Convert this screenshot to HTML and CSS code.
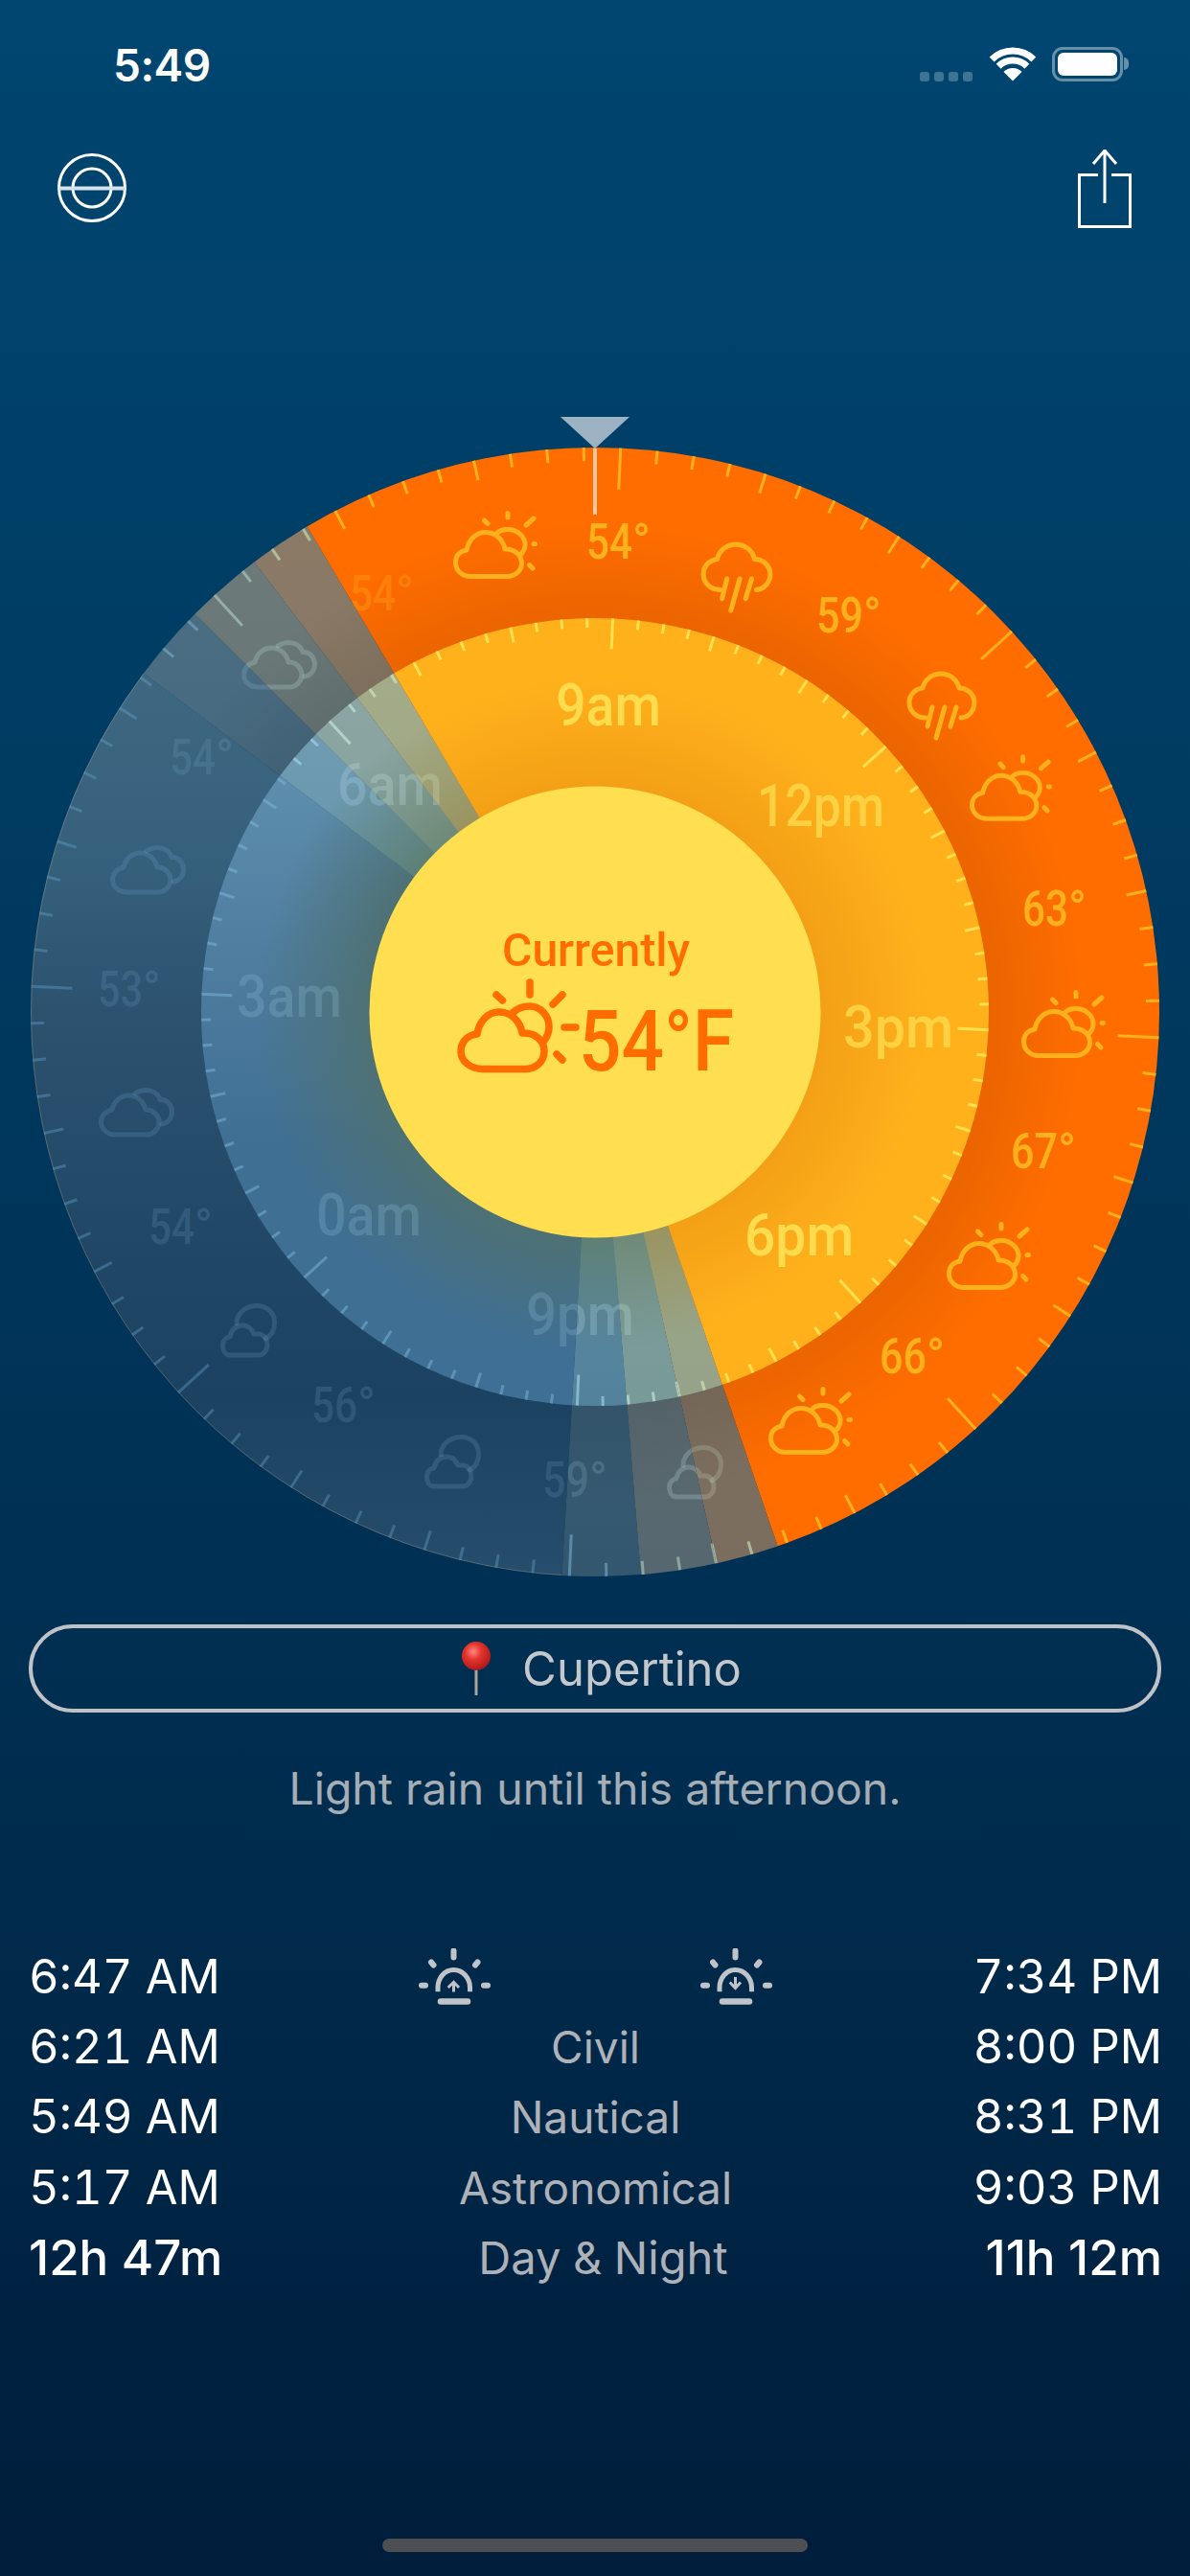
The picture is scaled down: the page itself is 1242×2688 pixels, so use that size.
FILE: index.html
```html
<!DOCTYPE html>
<html lang="en">
<head>
<meta charset="utf-8">
<title>Cupertino weather dial</title>
<link rel="stylesheet" href="styles.css">
</head>
<body>
<main class="screen">
  <header class="status">
    <span class="clock">5:49</span>
    <div class="status-icons">
      <div class="signal"><i></i><i></i><i></i><i></i></div>
      <svg class="wifi" viewBox="0 0 50 36"><path class="wifi-arc" d="M3.100 13.100A31 31 0 0 1 46.900 13.100"/><path class="wifi-arc" d="M10.200 20.200A21 21 0 0 1 39.800 20.200"/><path class="wifi-fan" d="M25 35.500L15.500 26A13.500 13.500 0 0 1 34.500 26Z"/></svg>
      <div class="battery"><div class="battery-fill"></div></div>
    </div>
  </header>

  <nav class="nav">
    <svg class="nav-globe" viewBox="0 0 72 72"><circle class="line" cx="36" cy="36" r="34.500"/><circle class="line" cx="36" cy="36" r="20"/><path class="line bar" d="M1 36.500H71"/></svg>
    <svg class="nav-share" viewBox="0 0 56 82"><path class="line" d="M21 26.500H1.500V80.500H54.500V26.500H35M28 56V2M16 15L28 1L40 15"/></svg>
  </nav>

  <svg class="dial" viewBox="0 416 1242 1250" role="img" aria-label="24 hour weather dial">
    <defs>
      <linearGradient id="outerNight" x1="0" y1="0" x2="0" y2="1"><stop offset="0" stop-color="#4a7189"/><stop offset=".13" stop-color="#436a83"/><stop offset=".37" stop-color="#35607c"/><stop offset=".5" stop-color="#2c5270"/><stop offset=".71" stop-color="#214766"/><stop offset=".84" stop-color="#1c4262"/><stop offset="1" stop-color="#264d6b"/></linearGradient>
      <linearGradient id="outerAstro" x1="0" y1="0" x2="0" y2="1"><stop offset="0" stop-color="#4f7186"/><stop offset="1" stop-color="#33576f"/></linearGradient>
      <linearGradient id="outerNaut" x1="0" y1="0" x2="0" y2="1"><stop offset="0" stop-color="#6e7c7a"/><stop offset="1" stop-color="#57676f"/></linearGradient>
      <linearGradient id="outerCivil" x1="0" y1="0" x2="0" y2="1"><stop offset="0" stop-color="#8c7b67"/><stop offset="1" stop-color="#7b6d5e"/></linearGradient>
      <linearGradient id="innerNight" x1="0" y1="0" x2="0" y2="1"><stop offset="0" stop-color="#6796b1"/><stop offset=".19" stop-color="#5f8fad"/><stop offset=".43" stop-color="#4e7da0"/><stop offset=".67" stop-color="#3f6f92"/><stop offset="1" stop-color="#3f6f94"/></linearGradient>
      <linearGradient id="innerAstro" x1="0" y1="0" x2="0" y2="1"><stop offset="0" stop-color="#74a0b6"/><stop offset="1" stop-color="#53829d"/></linearGradient>
      <linearGradient id="innerNaut" x1="0" y1="0" x2="0" y2="1"><stop offset="0" stop-color="#8da7a3"/><stop offset="1" stop-color="#789a98"/></linearGradient>
      <linearGradient id="innerCivil" x1="0" y1="0" x2="0" y2="1"><stop offset="0" stop-color="#a4ac88"/><stop offset="1" stop-color="#96a388"/></linearGradient>
      <radialGradient id="shadeNight"><stop offset=".572" stop-color="#4e7174"/><stop offset=".7" stop-color="#4e7174" stop-opacity=".55"/><stop offset=".86" stop-color="#4e7174" stop-opacity="0"/></radialGradient>
      <radialGradient id="shadeAstro"><stop offset=".572" stop-color="#5e8075"/><stop offset=".86" stop-color="#5e8075" stop-opacity="0"/></radialGradient>
      <radialGradient id="shadeNaut"><stop offset=".572" stop-color="#6f8a78"/><stop offset=".86" stop-color="#6f8a78" stop-opacity="0"/></radialGradient>
      <radialGradient id="shadeCivil"><stop offset=".572" stop-color="#9a9460"/><stop offset=".86" stop-color="#9a9460" stop-opacity="0"/></radialGradient>
      <radialGradient id="shadeDay"><stop offset=".572" stop-color="#f3a016"/><stop offset=".85" stop-color="#f3a016" stop-opacity="0"/></radialGradient>
      <radialGradient id="shadeOuter"><stop offset=".698" stop-color="#000" stop-opacity=".08"/><stop offset=".87" stop-color="#000" stop-opacity="0"/></radialGradient>

      <clipPath id="clipDay"><polygon points="621,1056 213,368 1021,363 1421,1056 880,1813"/></clipPath>
      <clipPath id="clipCivil"><polygon points="621,1056 138,418 213,368"/><polygon points="621,1056 880,1813 793,1837"/></clipPath>
      <clipPath id="clipNaut"><polygon points="621,1056 54,492 138,418"/><polygon points="621,1056 793,1837 686,1853"/></clipPath>
      <clipPath id="clipAstro"><polygon points="621,1056 -19,576 54,492"/><polygon points="621,1056 686,1853 574,1855"/></clipPath>
      <clipPath id="clipNight"><polygon points="621,1056 574,1855 221,1749 -179,1056 -19,576"/></clipPath>

      <symbol id="sunCloud" viewBox="0 0 126 97" overflow="visible">
        <path d="M27 93.500C15 93.500 4 86 4 75C4 65 11 58 21 57C23 44 32 34 44 34C57 34 66 44 68 56H70C82 56 91 64 91 75C91 86 82 93.500 71 93.500Z"/>
        <path d="M58 35C63 30 69 28 76 28C87 28 96 38 96 49C96 55 94 60 91 64"/>
        <path d="M76 3V16M110 16L100 26M112 50H124M104 78L110 84M41 16L47.500 22"/>
      </symbol>
      <symbol id="sunCloudSmall" viewBox="0 0 89 71" overflow="visible" class="thin">
        <path d="M18 68.500C9 68.500 2.500 62 2.500 54C2.500 47 7 42 14 41C16 30 24 22.500 34 22.500C44 22.500 52 30 54 40H55C64 40 71.500 46 71.500 55C71.500 62 65 68.500 56 68.500Z"/>
        <path d="M45 24C48 20.500 52 19.500 57 19.500C67 19.500 75 27 75 35C75 39 73.500 43 70 46"/>
        <path d="M57 2.500V7M76 15L84 8M84 34.500H85.500M79.500 56.500L83 60M32.500 10L36 13.500"/>
      </symbol>
      <symbol id="rainCloud" viewBox="0 0 74 72" overflow="visible" class="thin">
        <path d="M20 49C10 49 3 42 3 33C3 25 9 19 17 18C19 9 27 3 36 3C45 3 53 9 55 18C64 18 71 25 71 33C71 42 64 49 57 49"/>
        <path d="M27 38L22 58M40 38L31 70M52 38L46 58"/>
      </symbol>
      <symbol id="twoClouds" viewBox="0 0 79 52" overflow="visible" class="thin">
        <path d="M17 49C9 49 2.500 43 2.500 36C2.500 29 8 24 14 23C16 14 23 8 31 8C40 8 47 14 49 23H50C57 23 63 29 63 36C63 43 57 49 50 49Z"/>
        <path d="M38 6C41 4 45 2.500 49 2.500C56 2.500 62 6 64 12.500H66C72 13 76.500 19 76.500 25C76.500 32 72 37 66 38"/>
      </symbol>
      <symbol id="moonCloud" viewBox="0 0 59 57" overflow="visible" class="thin">
        <path d="M10 54C5 54 2.500 49 2.500 44C2.500 39 6 35 10 35C11 28 16 23 23 23C29 23 33 27 35 32H41C46 33 49 38 49 43C49 49 45 54 40 54Z"/>
        <path d="M17 21C17 10 27 2.500 38 2.500C49 2.500 56.500 10 56.500 20C56.500 28 53 34 47 37"/>
      </symbol>

      <!-- three quarter-hour marks, then the hour mark, then the three-hour group -->
      <g id="tickQuarters">
        <g transform="rotate(3.75 621 1056)"><line class="tick-o" x1="621" y1="467" x2="621" y2="481"/><line class="tick-i" x1="621" y1="645" x2="621" y2="655"/></g>
        <g transform="rotate(7.5 621 1056)"><line class="tick-o" x1="621" y1="467" x2="621" y2="481"/><line class="tick-i" x1="621" y1="645" x2="621" y2="655"/></g>
        <g transform="rotate(11.25 621 1056)"><line class="tick-o" x1="621" y1="467" x2="621" y2="481"/><line class="tick-i" x1="621" y1="645" x2="621" y2="655"/></g>
      </g>
      <g id="tickHour">
        <line class="tick-o" x1="621" y1="467" x2="621" y2="488"/>
        <line class="tick-i" x1="621" y1="645" x2="621" y2="661"/>
        <use href="#tickQuarters"/>
      </g>
      <g id="tickThree">
        <line class="tick-o" x1="621" y1="467" x2="621" y2="510"/>
        <line class="tick-i" x1="621" y1="645" x2="621" y2="677"/>
        <use href="#tickQuarters"/>
        <use href="#tickHour" transform="rotate(15 621 1056)"/>
        <use href="#tickHour" transform="rotate(30 621 1056)"/>
      </g>
      <g id="ticks" transform="rotate(2.6 621 1056)">
        <use href="#tickThree"/>
        <use href="#tickThree" transform="rotate(45 621 1056)"/>
        <use href="#tickThree" transform="rotate(90 621 1056)"/>
        <use href="#tickThree" transform="rotate(135 621 1056)"/>
        <use href="#tickThree" transform="rotate(180 621 1056)"/>
        <use href="#tickThree" transform="rotate(225 621 1056)"/>
        <use href="#tickThree" transform="rotate(270 621 1056)"/>
        <use href="#tickThree" transform="rotate(315 621 1056)"/>
      </g>

      <g id="marks">
        <use href="#ticks"/>
        <g class="temps">
          <text x="612" y="583"><tspan textLength="48" lengthAdjust="spacingAndGlyphs">54</tspan><tspan textLength="19" lengthAdjust="spacingAndGlyphs">°</tspan></text>
          <text class="faint" x="365" y="637"><tspan textLength="48" lengthAdjust="spacingAndGlyphs">54</tspan><tspan textLength="19" lengthAdjust="spacingAndGlyphs">°</tspan></text>
          <text x="852" y="660"><tspan textLength="49" lengthAdjust="spacingAndGlyphs">59</tspan><tspan textLength="19" lengthAdjust="spacingAndGlyphs">°</tspan></text>
          <text x="1067" y="966"><tspan textLength="48" lengthAdjust="spacingAndGlyphs">63</tspan><tspan textLength="19" lengthAdjust="spacingAndGlyphs">°</tspan></text>
          <text x="1055" y="1219"><tspan textLength="49" lengthAdjust="spacingAndGlyphs">67</tspan><tspan textLength="19" lengthAdjust="spacingAndGlyphs">°</tspan></text>
          <text x="918" y="1433"><tspan textLength="49" lengthAdjust="spacingAndGlyphs">66</tspan><tspan textLength="19" lengthAdjust="spacingAndGlyphs">°</tspan></text>
          <text x="566" y="1562"><tspan textLength="49" lengthAdjust="spacingAndGlyphs">59</tspan><tspan textLength="19" lengthAdjust="spacingAndGlyphs">°</tspan></text>
          <text x="325" y="1484"><tspan textLength="48" lengthAdjust="spacingAndGlyphs">56</tspan><tspan textLength="19" lengthAdjust="spacingAndGlyphs">°</tspan></text>
          <text x="155" y="1298"><tspan textLength="48" lengthAdjust="spacingAndGlyphs">54</tspan><tspan textLength="19" lengthAdjust="spacingAndGlyphs">°</tspan></text>
          <text x="102" y="1050"><tspan textLength="47" lengthAdjust="spacingAndGlyphs">53</tspan><tspan textLength="19" lengthAdjust="spacingAndGlyphs">°</tspan></text>
          <text x="177" y="808"><tspan textLength="48" lengthAdjust="spacingAndGlyphs">54</tspan><tspan textLength="19" lengthAdjust="spacingAndGlyphs">°</tspan></text>
        </g>
        <g class="hours">
          <text x="580" y="757" textLength="110" lengthAdjust="spacingAndGlyphs">9am</text>
          <text class="dim" x="790" y="862" textLength="133" lengthAdjust="spacingAndGlyphs">12pm</text>
          <text class="dim" x="880" y="1093" textLength="115" lengthAdjust="spacingAndGlyphs">3pm</text>
          <text x="777" y="1310" textLength="114" lengthAdjust="spacingAndGlyphs">6pm</text>
          <text x="549" y="1393" textLength="113" lengthAdjust="spacingAndGlyphs">9pm</text>
          <text x="330" y="1289" textLength="110" lengthAdjust="spacingAndGlyphs">0am</text>
          <text x="247" y="1061" textLength="110" lengthAdjust="spacingAndGlyphs">3am</text>
          <text x="352" y="840" textLength="110" lengthAdjust="spacingAndGlyphs">6am</text>
        </g>
        <g class="glyph">
          <use href="#sunCloudSmall" x="473" y="533" width="89" height="71"/>
          <use href="#rainCloud" x="731" y="565" width="76" height="74"/>
          <use href="#rainCloud" x="946" y="700" width="74" height="72"/>
          <use href="#sunCloudSmall" x="1012" y="787" width="87" height="70"/>
          <use href="#sunCloudSmall" x="1066" y="1033" width="89" height="71"/>
          <use href="#sunCloudSmall" x="988" y="1275" width="89" height="71"/>
          <use href="#sunCloudSmall" x="802" y="1447" width="89" height="71"/>
          <use href="#moonCloud" x="696" y="1508" width="59" height="57"/>
          <use href="#moonCloud" x="443" y="1497" width="59" height="57"/>
          <use href="#moonCloud" x="230" y="1360" width="59" height="57"/>
          <use href="#twoClouds" x="103" y="1135" width="79" height="52"/>
          <use href="#twoClouds" x="115" y="882" width="79" height="52"/>
          <use href="#twoClouds" x="252" y="668" width="79" height="52"/>
        </g>
      </g>
    </defs>

    <g class="sector sec-night" clip-path="url(#clipNight)">
      <circle class="ring-o" cx="621" cy="1056" r="589"/>
      <circle class="rim" cx="621" cy="1056" r="588.500"/>
      <circle class="ring-i" cx="621" cy="1056" r="411"/>
      <circle class="ring-s" cx="621" cy="1056" r="411"/>
      <use href="#marks"/>
    </g>
    <g class="sector sec-astro" clip-path="url(#clipAstro)">
      <circle class="ring-o" cx="621" cy="1056" r="589"/>
      <circle class="outer-shade" cx="621" cy="1056" r="589"/>
      <circle class="ring-i" cx="621" cy="1056" r="411"/>
      <circle class="ring-s" cx="621" cy="1056" r="411"/>
      <use href="#marks"/>
    </g>
    <g class="sector sec-naut" clip-path="url(#clipNaut)">
      <circle class="ring-o" cx="621" cy="1056" r="589"/>
      <circle class="outer-shade" cx="621" cy="1056" r="589"/>
      <circle class="ring-i" cx="621" cy="1056" r="411"/>
      <circle class="ring-s" cx="621" cy="1056" r="411"/>
      <use href="#marks"/>
    </g>
    <g class="sector sec-civil" clip-path="url(#clipCivil)">
      <circle class="ring-o" cx="621" cy="1056" r="589"/>
      <circle class="outer-shade" cx="621" cy="1056" r="589"/>
      <circle class="ring-i" cx="621" cy="1056" r="411"/>
      <circle class="ring-s" cx="621" cy="1056" r="411"/>
      <use href="#marks"/>
    </g>
    <g class="sector sec-day" clip-path="url(#clipDay)">
      <circle class="ring-o" cx="621" cy="1056" r="589"/>
      <circle class="outer-shade" cx="621" cy="1056" r="589"/>
      <circle class="ring-i" cx="621" cy="1056" r="411"/>
      <circle class="ring-s" cx="621" cy="1056" r="411"/>
      <use href="#marks"/>
    </g>

    <circle class="sun-disc" cx="621" cy="1056" r="235.500"/>
    <text class="now-label" x="524" y="1008" textLength="196" lengthAdjust="spacingAndGlyphs">Currently</text>
    <use class="now-icon" href="#sunCloud" x="477" y="1022" width="126" height="97"/>
    <text class="now-temp" x="604" y="1117" textLength="162" lengthAdjust="spacingAndGlyphs">54°F</text>

    <polygon class="pointer" points="585,435 657,435 621,468"/>
    <rect class="needle" x="619" y="468" width="4" height="69"/>
  </svg>

  <button class="location">
    <svg class="pin" viewBox="0 0 36 58">
      <defs><radialGradient id="pinBall" cx=".4" cy=".35" r=".7"><stop offset="0" stop-color="#ff8a80"/><stop offset=".4" stop-color="#e5342d"/><stop offset="1" stop-color="#a81818"/></radialGradient></defs>
      <rect class="pin-stem" x="16.500" y="26" width="3" height="31"/>
      <circle class="pin-ball" cx="18" cy="16" r="15"/>
    </svg>
    <span>Cupertino</span>
  </button>

  <p class="summary">Light rain until this afternoon.</p>

  <section class="times">
    <div>6:47 AM</div>
    <div class="mid sun-icons">
      <svg class="sun-icon" viewBox="0 0 80 60"><path d="M39.500 2.500V9.500M16 14.500L18.500 17.500M64.500 14.500L62 17.500M6 38.700H10M71 38.700H75"/><path class="sun-dome" d="M23 45.300V41C23 31 30 22.500 39.500 22.500C49 22.500 56.500 31 56.500 41V45.300"/><path class="sun-base" d="M26 55.500H54"/><path class="sun-arrow" d="M39.500 45.500V36M33.700 41L39.500 35.300L45 41"/></svg>
      <svg class="sun-icon" viewBox="0 0 80 60"><path d="M39.500 2.500V9.500M16 14.500L18.500 17.500M64.500 14.500L62 17.500M6 38.700H10M71 38.700H75"/><path class="sun-dome" d="M23 45.300V41C23 31 30 22.500 39.500 22.500C49 22.500 56.500 31 56.500 41V45.300"/><path class="sun-base" d="M26 55.500H54"/><path class="sun-arrow" d="M39.500 30V41M33.700 35.500L39.500 41.500L45 35.500"/></svg>
    </div>
    <div class="end">7:34 PM</div>

    <div>6:21 AM</div><div class="mid">Civil</div><div class="end">8:00 PM</div>
    <div>5:49 AM</div><div class="mid">Nautical</div><div class="end">8:31 PM</div>
    <div>5:17 AM</div><div class="mid">Astronomical</div><div class="end">9:03 PM</div>

    <div class="total">12h 47m</div><div class="mid offset">Day &amp; Night</div><div class="end total">11h 12m</div>
  </section>

  <div class="home-bar"></div>
</main>
</body>
</html>
```

FILE: styles.css
```css
* { box-sizing: border-box; }
html, body { margin: 0; padding: 0; }
body { width: 1242px; height: 2688px; overflow: hidden; font-family: Inter, "Noto Sans", sans-serif; }

.screen {
  width: 1242px;
  height: 2688px;
  display: flex;
  flex-direction: column;
  background: linear-gradient(180deg, #004670 0%, #003053 62%, #001d3b 100%);
  color: #fff;
}

/* status bar */
.status {
  height: 136px;
  padding: 37px 70px 0 118px;
  display: flex;
  justify-content: space-between;
  align-items: flex-start;
}
.clock { font-size: 46px; line-height: 62px; font-weight: 600; letter-spacing: -.5px; }
.status-icons { display: flex; align-items: flex-start; margin-top: 12px; }
.signal { display: flex; gap: 5px; margin-top: 26px; margin-right: 17px; }
.signal i { display: block; width: 10px; height: 10px; border-radius: 3px; background: rgba(255,255,255,.25); }
.wifi { width: 50px; height: 36px; display: block; margin-right: 16px; }
.wifi-arc { fill: none; stroke: #fff; stroke-width: 7; }
.wifi-fan { fill: #fff; }
.battery {
  position: relative;
  width: 74px;
  height: 36px;
  border: 3px solid rgba(255,255,255,.4);
  border-radius: 11px;
  padding: 3px;
}
.battery::after {
  content: "";
  position: absolute;
  right: -9px;
  top: 8px;
  width: 5px;
  height: 13px;
  border-radius: 0 5px 5px 0;
  background: rgba(255,255,255,.4);
}
.battery-fill { height: 100%; background: #fff; border-radius: 6px; }

/* nav */
.nav {
  height: 280px;
  padding: 24px 61px 0 60px;
  display: flex;
  justify-content: space-between;
  align-items: flex-start;
}
.nav-globe { width: 72px; height: 72px; display: block; }
.nav-share { width: 56px; height: 82px; display: block; margin-top: -4px; }
.line { fill: none; stroke: #fff; stroke-width: 3; }
.bar { stroke: #d6e2ea; stroke-width: 4; }

/* dial */
.dial { display: block; width: 1242px; height: 1250px; flex: none; }
.rim { fill: none; stroke: rgba(255,210,150,.22); stroke-width: 1; }
.outer-shade { fill: url(#shadeOuter); }

.sec-day   { --tick-o: #ffb11c; --tick-i: #ffe04f; --text-o: #ffb11c; --text-i: #ffdc4e; }
.sec-civil { --tick-o: rgba(205,235,190,.6); --tick-i: rgba(215,240,190,.6); --text-o: rgba(215,235,205,.2); --text-i: rgba(225,240,205,.22); }
.sec-naut  { --tick-o: rgba(190,230,210,.5); --tick-i: rgba(205,240,225,.6); --text-o: rgba(190,225,225,.25); --text-i: rgba(200,230,230,.25); }
.sec-astro { --tick-o: rgba(130,190,225,.5); --tick-i: rgba(175,225,240,.55); --text-o: rgba(140,190,215,.24); --text-i: rgba(175,215,235,.28); }
.sec-night { --tick-o: rgba(110,175,215,.35); --tick-i: rgba(130,190,225,.45); --text-o: rgba(120,175,210,.2); --text-i: rgba(150,200,225,.24); }

.sec-day .ring-o { fill: #ff6d00; }
.sec-day .ring-i { fill: #ffb11c; }
.sec-day .ring-s { fill: url(#shadeDay); }
.sec-civil .ring-o { fill: url(#outerCivil); }
.sec-civil .ring-i { fill: url(#innerCivil); }
.sec-civil .ring-s { fill: url(#shadeCivil); }
.sec-naut .ring-o { fill: url(#outerNaut); }
.sec-naut .ring-i { fill: url(#innerNaut); }
.sec-naut .ring-s { fill: url(#shadeNaut); }
.sec-astro .ring-o { fill: url(#outerAstro); }
.sec-astro .ring-i { fill: url(#innerAstro); }
.sec-astro .ring-s { fill: url(#shadeAstro); }
.sec-night .ring-o { fill: url(#outerNight); }
.sec-night .ring-i { fill: url(#innerNight); }
.sec-night .ring-s { fill: url(#shadeNight); }

.tick-o { stroke: var(--tick-o); stroke-width: 3; }
.tick-i { stroke: var(--tick-i); stroke-width: 3; }

.temps, .hours, .now-label, .now-temp { font-family: Roboto, "Noto Sans", sans-serif; font-weight: 500; }
.temps { font-size: 51px; fill: var(--text-o); }
.hours { font-size: 62px; fill: var(--text-i); }
.faint { opacity: .3; }
.dim { opacity: .78; }

.glyph { fill: none; stroke: var(--text-o); stroke-width: 7.500; stroke-linecap: round; stroke-linejoin: round; }
.thin { stroke-width: 5; }

.sun-disc { fill: #ffdf4f; }
.now-label { font-size: 49px; fill: #ff6d00; }
.now-temp { font-size: 89px; fill: #ff6d00; }
.now-icon { fill: none; stroke: #ff6d00; stroke-width: 7.500; stroke-linecap: round; stroke-linejoin: round; }
.pointer { fill: #9db2c2; }
.needle { fill: rgba(255,255,255,.62); }

/* location */
.location {
  margin: 29px 30px 0;
  height: 92px;
  flex: none;
  display: flex;
  align-items: center;
  justify-content: center;
  gap: 30px;
  background: transparent;
  border: 4px solid #bfc3c7;
  border-radius: 46px;
  color: #c4c7cb;
  font-family: inherit;
  font-size: 49px;
  padding: 0 0 0 11px;
}
.pin { width: 36px; height: 58px; display: block; }
.pin-stem { fill: #a9a296; }
.pin-ball { fill: url(#pinBall); }

.summary {
  margin: 49px 0 0;
  height: 60px;
  line-height: 60px;
  text-align: center;
  font-size: 46.400px;
  color: #a5adb5;
}

/* times table */
.times {
  margin-top: 130px;
  padding: 0 29px 0 30px;
  display: grid;
  grid-template-columns: 1fr 1fr 1fr;
  grid-auto-rows: 73.300px;
  align-items: center;
  font-size: 49px;
  line-height: 60px;
  font-variant-numeric: tabular-nums;
}
.mid { text-align: center; color: #aeb2b8; font-size: 46px; }
.offset { padding-left: 16px; white-space: nowrap; font-size: 47px; }
.end { text-align: right; }
.total { font-weight: 500; font-size: 51px; font-variant-numeric: normal; }
.sun-icons { display: flex; justify-content: center; gap: 214px; margin: 0 -100px; }
.sun-icon { width: 80px; height: 60px; display: block; fill: none; stroke: #c0c4c8; stroke-width: 6; stroke-linecap: round; }
.sun-dome { stroke-width: 5; stroke-linecap: butt; }
.sun-base { stroke-width: 6.500; }
.sun-arrow { stroke-width: 3; stroke-linecap: butt; }

.home-bar {
  margin: auto 399px 25px;
  height: 14px;
  border-radius: 7px;
  background: #4d4f52;
}
```
